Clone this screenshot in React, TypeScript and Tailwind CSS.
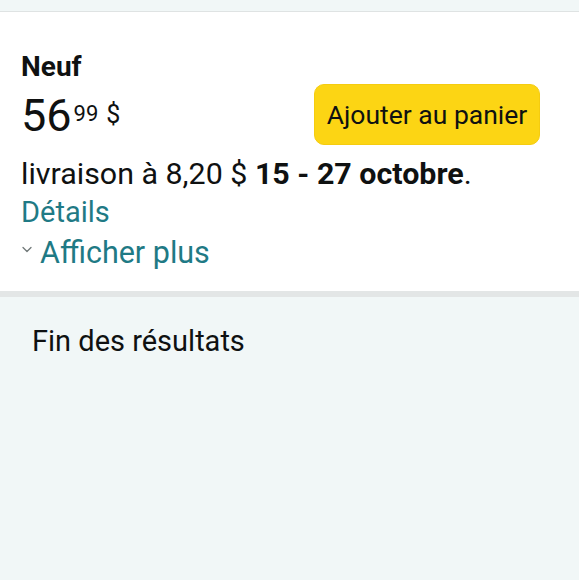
import React from 'react';

const font = { fontFamily: 'Roboto, "Noto Sans", sans-serif' };

function Chevron() {
  return (
    <svg width="10" height="7" viewBox="0 0 10 7" className="mt-[12px] ml-px mr-[8px] shrink-0">
      <polyline points="1,1.5 5,5.5 9,1.5" fill="none" stroke="#707878" strokeWidth="1.3" strokeLinecap="round" strokeLinejoin="round" />
    </svg>
  );
}

export default function App() {
  return (
    <div className="w-[579px] h-[580px] overflow-hidden bg-[#f1f7f7] text-[#0f1111]" style={font}>
      <div className="h-[12px] border-b border-[#dfe3e3]" />

      {/* carte de l'offre */}
      <div className="bg-white px-[21px] pt-[39px] pb-[19px]">
        <div className="text-[28px] leading-[32px] font-bold">Neuf</div>

        <div className="mt-px flex justify-between">
          <div className="mt-[9px] flex items-start">
            <span className="text-[45px] leading-[45px]">56</span>
            <span className="text-[22px] leading-[22px] mt-[10px] ml-[2px]">99</span>
            <span className="text-[25px] leading-[25px] mt-[9px] ml-[8px]">$</span>
          </div>
          <button className="mr-[18px] h-[61px] w-[226px] rounded-[10px] bg-[#fcd514] border border-[#f5cc10] text-[26.5px] text-[#0f1111] whitespace-nowrap">
            Ajouter au panier
          </button>
        </div>

        <div className="mt-[10px] h-[39px] text-[30.4px] leading-[38px] whitespace-nowrap">
          livraison à 8,20 $ <span className="font-bold">15 - 27 octobre</span>.
        </div>
        <div className="h-[40px] text-[29px] leading-[37px] text-[#1f7a85]">Détails</div>
        <div className="flex items-start h-[38px] text-[30.5px] leading-[38px] text-[#1f7a85]">
          <Chevron />
          <span>Afficher plus</span>
        </div>
      </div>

      <div className="h-[6px] bg-[#e3e6e6]" />

      <div className="pl-[32px] pt-[28px] text-[29px] leading-[32px]">Fin des résultats</div>
    </div>
  );
}
